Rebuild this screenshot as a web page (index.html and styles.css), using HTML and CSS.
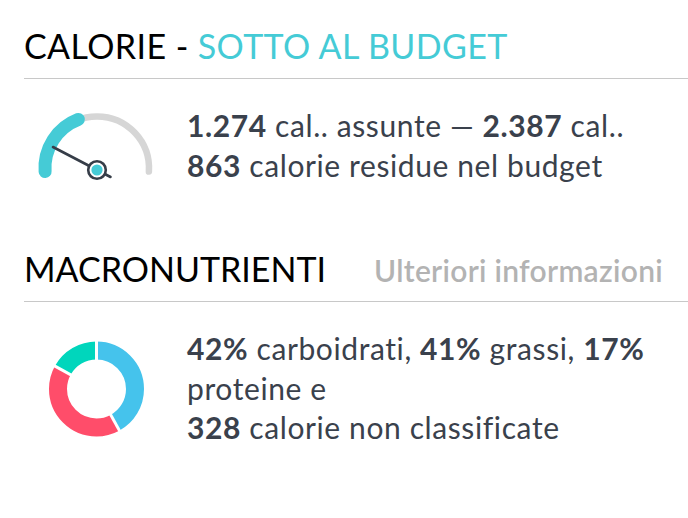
FILE: index.html
```html
<!DOCTYPE html>
<html lang="it">
<head>
<meta charset="utf-8">
<link rel="stylesheet" href="styles.css">
</head>
<body>
<main class="panel">
  <section class="section">
    <header class="section-head head-first">
      <h1 class="title title-cal">CALORIE - <span class="accent">SOTTO AL BUDGET</span></h1>
    </header>
    <div class="row row-cal">
      <svg class="gauge" width="150" height="80" viewBox="0 0 150 80">
        <path d="M 21.1 65.6 A 52 52 0 1 1 124.9 65.6" fill="none" stroke="#d6d6d6" stroke-width="6.5" stroke-linecap="round"/>
        <path d="M 21.1 65.6 A 52 52 0 0 1 54.4 13.4" fill="none" stroke="#45cbd6" stroke-width="13" stroke-linecap="round"/>
        <line x1="29" y1="41" x2="86.5" y2="71" stroke="#363d48" stroke-width="2.6" stroke-linecap="round"/>
        <circle cx="73" cy="64" r="8.8" fill="#fff" stroke="#363d48" stroke-width="2.6"/>
        <circle cx="73" cy="64" r="5.6" fill="#45cbd6"/>
      </svg>
      <p class="summary"><b>1.274</b> cal.. assunte — <b>2.387</b> cal..<br><b>863</b> calorie residue nel budget</p>
    </div>
  </section>
  <section class="section">
    <header class="section-head head-second">
      <h2 class="title">MACRONUTRIENTI</h2>
      <a class="more">Ulteriori informazioni</a>
    </header>
    <div class="row row-macro">
      <svg class="donut" width="150" height="110" viewBox="0 0 150 110">
        <g transform="rotate(-90 72.5 60)">
          <circle cx="72.5" cy="60" r="38.5" fill="none" stroke="#45c3ec" stroke-width="18" stroke-dasharray="101.6 241.9" stroke-dashoffset="0"/>
          <circle cx="72.5" cy="60" r="38.5" fill="none" stroke="#ff4d6a" stroke-width="18" stroke-dasharray="99.2 241.9" stroke-dashoffset="-101.6"/>
          <circle cx="72.5" cy="60" r="38.5" fill="none" stroke="#00d6bc" stroke-width="18" stroke-dasharray="41.1 241.9" stroke-dashoffset="-200.8"/>
        </g>
        <g stroke="#fff" stroke-width="3">
          <line x1="72.5" y1="60" x2="72.5" y2="9"/>
          <line x1="72.5" y1="60" x2="97.1" y2="104.6"/>
          <line x1="72.5" y1="60" x2="27.8" y2="35.4"/>
        </g>
      </svg>
      <p class="summary"><b>42%</b> carboidrati, <b>41%</b> grassi, <b>17%</b><br>proteine e<br><b>328</b> calorie non classificate</p>
    </div>
  </section>
</main>
</body>
</html>
```

FILE: styles.css
```css
* { box-sizing: border-box; }
html, body { margin: 0; padding: 0; background: #fff; }
body { font-family: Lato, "Open Sans", sans-serif; color: #3a414c; }
.panel { padding-left: 24px; width: 688px; }
.section-head {
  display: flex;
  justify-content: space-between;
  align-items: baseline;
  border-bottom: 1px solid #c8c8c8;
  padding-bottom: 12px;
  padding-right: 25px;
}
.head-first { padding-top: 26px; }
.head-second { padding-top: 63px; }
.title {
  margin: 0;
  font-size: 34px;
  line-height: 40px;
  font-weight: 400;
  color: #000;
}
.title-cal { letter-spacing: 0.4px; }
.accent { color: #45cbd6; }
.more {
  font-size: 30px;
  font-weight: 600;
  letter-spacing: 0.3px;
  color: #b3b3b3;
}
.row {
  display: flex;
  align-items: flex-start;
  gap: 13px;
  padding-top: 27px;
}
.gauge, .donut { flex: none; display: block; }
.summary {
  margin: 0;
  font-size: 30px;
  line-height: 39.5px;
  font-weight: 400;
  letter-spacing: 0.6px;
  color: #3a414c;
}
.summary b { font-weight: 700; }
```
